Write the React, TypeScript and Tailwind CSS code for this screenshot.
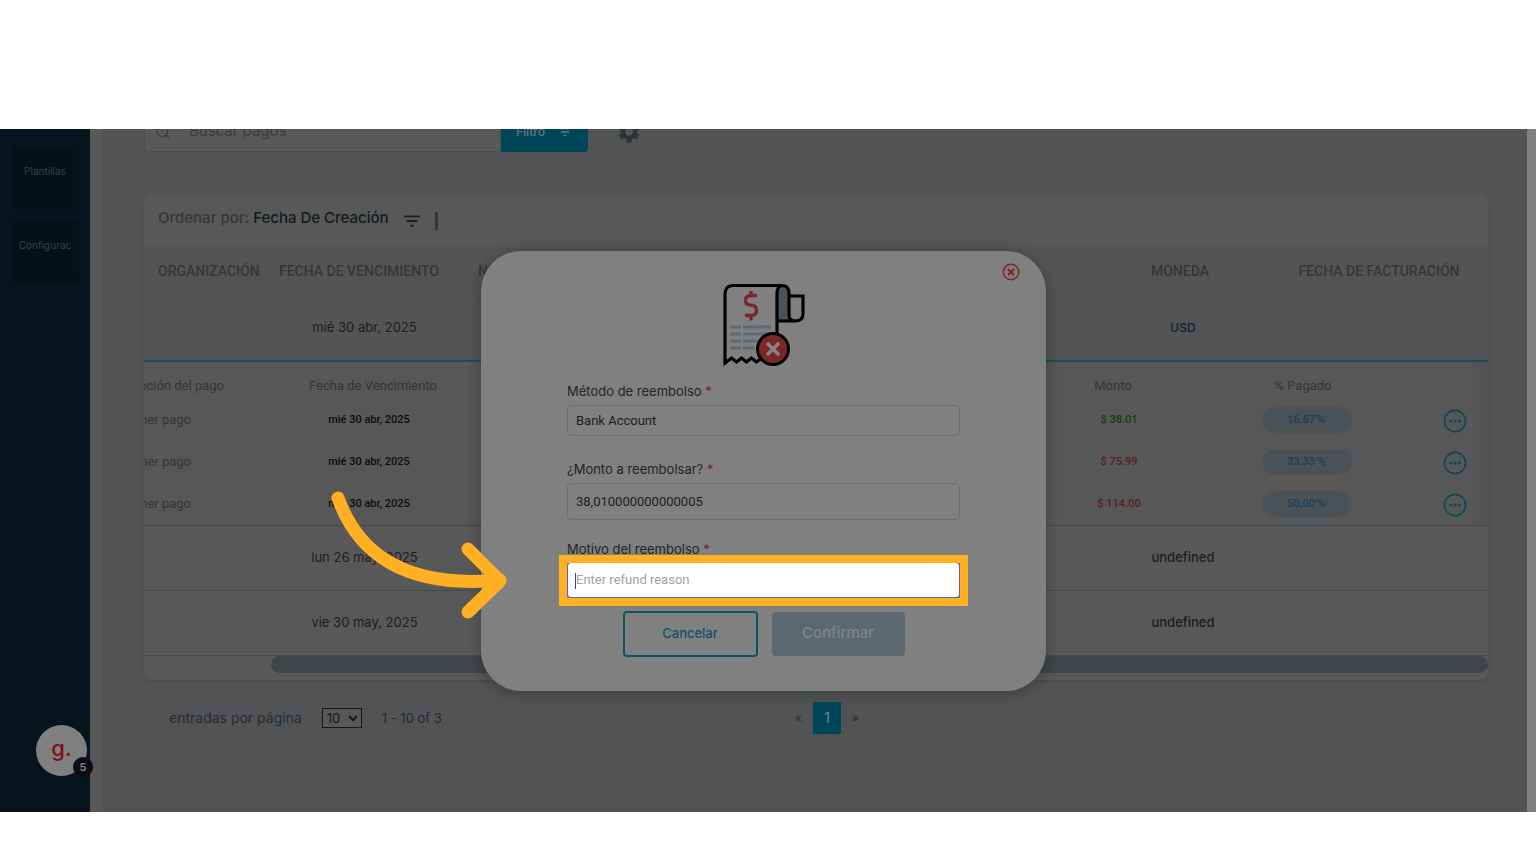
import { useState } from "react";
import { MdFilterList, MdSettings } from "react-icons/md";
import { Search } from "lucide-react";

type Installment = {
  date: string;
  amount: string;
  paid: string;
  settled: boolean;
};

const INSTALLMENTS: Installment[] = [
  { date: "mié 30 abr, 2025", amount: "$ 38.01", paid: "16.67'%'", settled: true },
  { date: "mié 30 abr, 2025", amount: "$ 75.99", paid: "33.33'%'", settled: false },
  { date: "mié 30 abr, 2025", amount: "$ 114.00", paid: "50.00'%'", settled: false },
];

const PENDING = ["lun 26 may, 2025", "vie 30 may, 2025"];

function Sidebar() {
  return (
    <nav className="flex w-[90px] shrink-0 flex-col items-center gap-[11px] bg-[#06151d] pt-[17px] text-[10px] text-[#34434a]">
      <a href="#plantillas" className="flex h-[63px] w-[67px] justify-center overflow-hidden rounded bg-[#041118] pt-[18px]">
        Plantillas
      </a>
      <a href="#configuracion" className="flex h-[63px] w-[67px] justify-center overflow-hidden rounded bg-[#041118] pt-[18px]">
        Configurac
      </a>
    </nav>
  );
}

function SearchBar() {
  return (
    <div className="-mt-[18px] flex h-[41px] items-center">
      <label className="flex h-full w-[357px] items-center gap-[18px] rounded-bl border border-[#4b4c4e] bg-[#585858] pl-2.5">
        <Search className="size-4 text-[#3b3d40]" strokeWidth={2} />
        <input
          aria-label="Buscar pagos"
          placeholder="Buscar pagos"
          className="w-[280px] bg-transparent text-[15px] outline-none placeholder:text-[#3b3d40]"
        />
      </label>
      <button className="flex h-full w-[87px] items-center justify-center gap-3 rounded-br bg-[#004559] text-xs font-medium text-[#66777d]">
        Filtro
        <MdFilterList className="size-4" />
      </button>
      <button aria-label="Ajustes" className="ml-7 text-[#2c3436]">
        <MdSettings className="size-[26px]" />
      </button>
    </div>
  );
}

function InstallmentTable() {
  return (
    <div className="bg-[#525456] pr-[15px]">
      <table className="w-full table-fixed bg-[#575757] text-[13px]">
        <colgroup>
          <col className="w-[125px]" />
          <col className="w-[200px]" />
          <col />
          <col className="w-[100px]" />
          <col className="w-[280px]" />
          <col className="w-[30px]" />
        </colgroup>
        <thead className="font-[Roboto] text-[#343536]">
          <tr className="h-[37px]">
            <th className="p-0 pt-2.5 font-normal">
              <div className="flex w-[80px] justify-end overflow-hidden whitespace-nowrap">Descripción del pago</div>
            </th>
            <th className="p-0 pt-2.5 pl-2 font-normal">Fecha de Vencimiento</th>
            <th></th>
            <th className="p-0 pt-2.5 font-normal">Monto</th>
            <th className="p-0 pt-2.5 font-normal">% Pagado</th>
            <th></th>
          </tr>
        </thead>
        <tbody>
          {INSTALLMENTS.map((row) => (
            <tr key={row.amount} className="h-[42px] text-center">
              <td className="p-0 font-[Roboto] text-[#343536]">
                <div className="flex w-[47px] justify-end overflow-hidden whitespace-nowrap">Primer pago</div>
              </td>
              <td className="p-0 font-[Roboto] text-[11px] font-medium text-[#0c0c0c]">{row.date}</td>
              <td></td>
              <td
                className={`p-0 pl-3 font-[Roboto] text-[11px] font-medium whitespace-nowrap ${
                  row.settled ? "text-[#0f3d12]" : "text-[#5a1a1e]"
                }`}
              >
                {row.amount}
              </td>
              <td className="p-0 pl-2">
                <span className="mx-auto flex h-[26px] w-[90px] items-center justify-center rounded-full bg-[#4b5257] font-[Roboto] text-[11px] font-medium text-[#173e5c]">
                  {row.paid}
                </span>
              </td>
              <td className="p-0">
                <button aria-label="Más opciones" className="mt-0.5 block text-[#0e4657]">
                  <svg width="24" height="24" viewBox="0 0 24 24" fill="none" stroke="currentColor" strokeWidth="1.6">
                    <circle cx="12" cy="12" r="10.6" />
                    <g fill="currentColor" stroke="none">
                      <circle cx="7.6" cy="12" r="1.6" />
                      <circle cx="12" cy="12" r="1.6" />
                      <circle cx="16.4" cy="12" r="1.6" />
                    </g>
                  </svg>
                </button>
              </td>
            </tr>
          ))}
        </tbody>
      </table>
    </div>
  );
}

function PaymentsCard() {
  return (
    <section className="mt-[43px] overflow-hidden rounded-lg bg-[#585858] shadow-sm">
      <div className="flex h-[51px] items-center pb-1 pl-3.5 text-[15px]">
        <span className="font-medium text-[#343638]">Ordenar por:</span>
        <span className="ml-1 font-medium text-[#0f1a20]">Fecha De Creación</span>
        <MdFilterList className="mt-1 ml-3 size-[22px] text-[#142028]" />
        <span className="mt-1 ml-3 h-[18px] w-[3px] bg-[#333a3e]" />
      </div>
      <table className="w-full table-fixed text-[13px]">
        <colgroup>
          <col className="w-[121px]" />
          <col className="w-[199px]" />
          <col />
          <col className="w-[174px]" />
          <col className="w-[218px]" />
        </colgroup>
        <thead className="bg-[#545454] font-[Roboto] text-sm text-[#343636]">
          <tr className="h-[49px] text-left">
            <th className="p-0 pl-3.5 font-medium whitespace-nowrap">ORGANIZACIÓN</th>
            <th className="p-0 pl-3.5 font-medium whitespace-nowrap">FECHA DE VENCIMIENTO</th>
            <th className="p-0 pl-3.5 font-medium">NOTAS</th>
            <th className="p-0 pr-1.5 text-center font-medium">MONEDA</th>
            <th className="p-0 text-center font-medium whitespace-nowrap">FECHA DE FACTURACIÓN</th>
          </tr>
        </thead>
        <tbody>
          <tr className="h-[66px] border-b-2 border-[#204954] bg-[#525456] text-center">
            <td></td>
            <td className="text-[#1b1c1e]">mié 30 abr, 2025</td>
            <td></td>
            <td className="text-xs font-medium text-[#171e29]">USD</td>
            <td></td>
          </tr>
          <tr>
            <td colSpan={5} className="p-0">
              <InstallmentTable />
            </td>
          </tr>
          {PENDING.map((date) => (
            <tr key={date} className="h-[65px] border-y border-[#47484a] text-center">
              <td></td>
              <td className="text-[#1b1c1e]">{date}</td>
              <td></td>
              <td className="font-medium text-[#171e29]">undefined</td>
              <td></td>
            </tr>
          ))}
        </tbody>
      </table>
      <div className="pb-[7px] pl-[127px]">
        <div className="h-[17px] rounded-full bg-[#3f4549]" />
      </div>
    </section>
  );
}

function Pagination() {
  return (
    <footer className="mt-[22px] flex items-center justify-between pr-[617px] pl-[25px] text-sm text-[#242b30]">
      <div className="flex items-center">
        <label htmlFor="page-size">entradas por página</label>
        <select
          id="page-size"
          defaultValue="10"
          className="ml-5 h-5 w-10 border border-[#161616] bg-[#585858] text-[13px] text-[#161616]"
        >
          <option>10</option>
          <option>25</option>
          <option>50</option>
        </select>
        <span className="ml-5 text-[13px]">1 - 10 of 3</span>
      </div>
      <div className="flex h-8 rounded border border-[#4e4f51] text-[#292d30]">
        <button aria-label="Anterior" className="w-[29px] text-xs">«</button>
        <button className="-my-px w-7 bg-[#004559] text-[#71828a]">1</button>
        <button aria-label="Siguiente" className="w-[29px] text-xs">»</button>
      </div>
    </footer>
  );
}

function ReceiptIcon() {
  return (
    <svg width="82" height="84" viewBox="0 0 82 84" fill="none">
      <path d="M54 9q0-6.500 5-6.500 7 0 7 7v22q0 3 2 6H54z" fill="#4a5358" />
      <path
        d="M59 2.500H10q-8 0-8 9V80l6.500-5 5 4 5-4 5 4 5-4 5 4 5-4 5 4V66M54 54V11q0-8.500 5.500-8.500Q66 2.500 66 11v21q0 6 6 6 8 0 8-7V13H66M54 38h18"
        stroke="#000"
        strokeWidth="3.200"
      />
      <path
        d="M34 12.500h-6q-5.500 0-5.500 4.800t5.500 4.800q5.500 0 5.500 5.200t-5.500 5.200h-6M28 8v5M28 32.500v5"
        stroke="#7d2628"
        strokeWidth="3.400"
      />
      <path d="M7 44h11M20 44h28M7 51h11M20 51h24M7 58h11M20 58h14M7 65h11M20 65h12" stroke="#5f6a70" strokeWidth="3" />
      <circle cx="50" cy="66" r="15.500" fill="#7d2628" stroke="#000" strokeWidth="3" />
      <path d="m44 60 12 12M56 60 44 72" stroke="#858585" strokeWidth="3.400" />
    </svg>
  );
}

function Required() {
  return <span className="text-[#70202a]"> *</span>;
}

function RefundModal() {
  const [amount, setAmount] = useState("38,010000000000005");
  const [reason, setReason] = useState("");

  const field = "w-full rounded border border-[#6d6d6d] px-2 font-[Roboto] text-[13px] text-[#1b1c1e] outline-none";

  return (
    <div
      role="dialog"
      aria-label="Reembolso"
      className="relative flex w-[565px] flex-col items-center rounded-[40px] bg-[#808080] px-[86px] pt-8 pb-[34px] shadow-[0_2px_14px_rgba(0,0,0,0.3)]"
    >
      <button aria-label="Cerrar" className="absolute top-3 right-[26px] text-[#7d2628]">
        <svg width="18" height="18" viewBox="0 0 18 18" fill="none" stroke="currentColor">
          <circle cx="9" cy="9" r="7.700" strokeWidth="1.500" />
          <path d="m6 6 6 6M12 6l-6 6" strokeWidth="2.200" />
        </svg>
      </button>
      <ReceiptIcon />
      <form className="mt-3.5 w-full text-[13px] text-[#222425]">
        <label htmlFor="method" className="block leading-5">
          Método de reembolso
          <Required />
        </label>
        <input id="method" readOnly value="Bank Account" className={`${field} mt-1 block h-[31px]`} />

        <label htmlFor="amount" className="mt-[23px] block leading-5">
          ¿Monto a reembolsar?
          <Required />
        </label>
        <input
          id="amount"
          value={amount}
          onChange={(e) => setAmount(e.target.value)}
          className={`${field} mt-1 block h-[37px]`}
        />

        <label htmlFor="reason" className="mt-[19px] block leading-5">
          Motivo del reembolso
          <Required />
        </label>
        <div className="relative mt-1">
          <span className="pointer-events-none absolute -inset-2 border-8 border-[#ffb123]" />
          <input
            id="reason"
            value={reason}
            onChange={(e) => setReason(e.target.value)}
            placeholder="Enter refund reason"
            className="relative block h-[35px] w-full rounded border border-t-0 border-[#5b5fc7] bg-white px-2 font-[Roboto] text-[13px] outline-none placeholder:text-[#a3a3a3]"
          />
          <span className="pointer-events-none absolute top-2.5 left-2 h-4 w-px bg-[#3f3fc0]" />
          <svg
            width="190"
            height="140"
            viewBox="0 0 190 140"
            fill="none"
            stroke="#ffb123"
            strokeWidth="13"
            strokeLinecap="round"
            strokeLinejoin="round"
            className="pointer-events-none absolute -top-[78px] right-full mr-[52px]"
          >
            <path d="M13 13C30 60 70 105 175 95M143 64l32 32-32 31" />
          </svg>
        </div>

        <div className="mt-[13px] flex items-center justify-center gap-3.5">
          <button type="button" className="h-[46px] w-[135px] rounded border-2 border-[#0b5468] font-medium text-[#0b5468]">
            Cancelar
          </button>
          <button type="button" disabled className="h-11 w-[133px] rounded bg-[#5b686f] text-[15px] font-medium text-[#7d868a]">
            Confirmar
          </button>
        </div>
      </form>
    </div>
  );
}

export default function App() {
  return (
    <div className="flex min-h-screen flex-col bg-white pt-[129px] pb-[52px] font-[Inter,sans-serif]">
      <div className="relative flex flex-1 overflow-hidden">
        <Sidebar />
        <div className="w-3 shrink-0 bg-[#595857]" />
        <main className="min-w-0 flex-1 bg-[#525355] pr-[39px] pl-[42px]">
          <SearchBar />
          <PaymentsCard />
          <Pagination />
        </main>
        <div className="w-[9px] shrink-0 bg-[#808080]" />

        <div className="absolute inset-y-0 right-[9px] left-0 flex items-center justify-center">
          <RefundModal />
        </div>

        <button
          aria-label="Abrir chat"
          className="absolute bottom-9 left-9 flex size-[51px] items-center justify-center rounded-full bg-[#808080] pb-1 text-[22px] font-medium text-[#7a1114]"
        >
          g.
          <span className="absolute -right-1.5 -bottom-px flex size-5 items-center justify-center rounded-full bg-[#0b0d16] text-[11px] font-semibold text-[#858585]">
            5
          </span>
        </button>
      </div>
    </div>
  );
}
